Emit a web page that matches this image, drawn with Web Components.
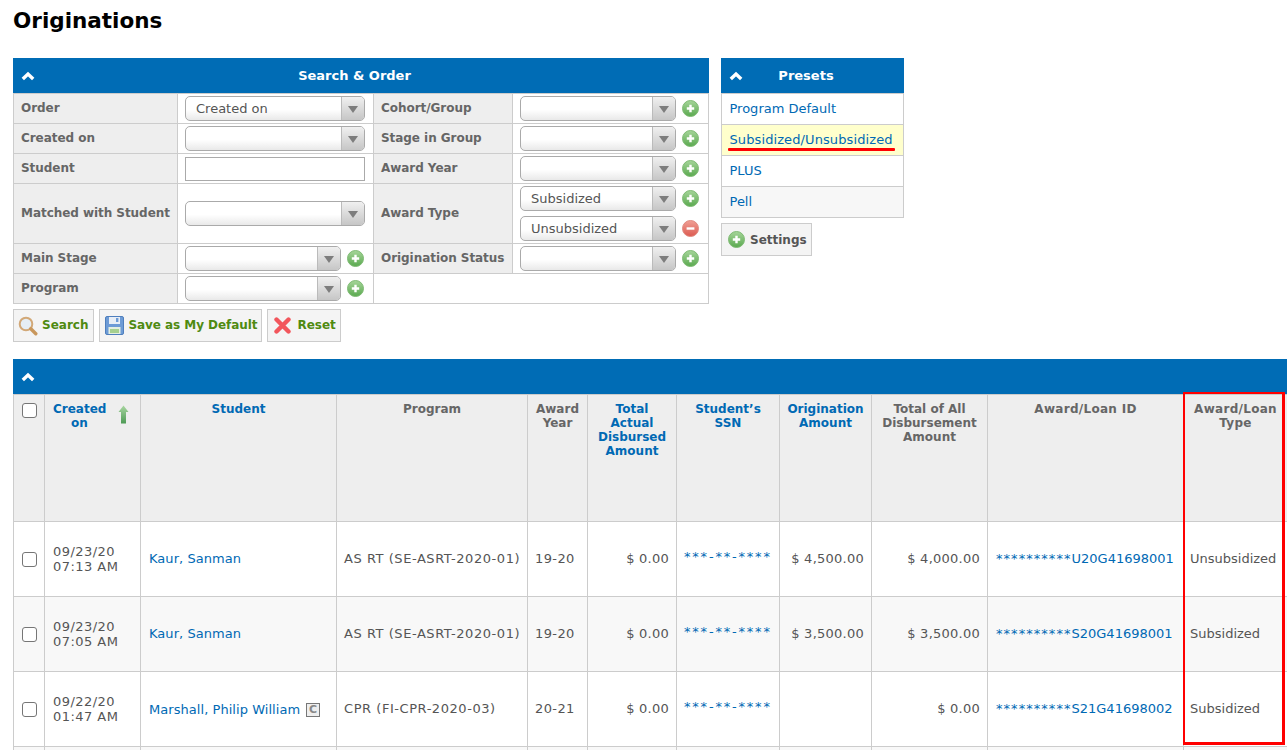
<!DOCTYPE html>
<html lang="en"><head><meta charset="utf-8"><title>Originations</title>
<style>
html,body{margin:0;padding:0;background:#fff;overflow:hidden;height:750px}
body{font:13px/15px "DejaVu Sans","Liberation Sans",sans-serif;color:#555}
</style></head><body>
<origination-page></origination-page>
<script>
const ICONS={
chev:'<svg width="14" height="10" viewBox="0 0 14 10"><path d="M1.800 8 7 3l5.200 5" fill="none" stroke="#fff" stroke-width="3.400"/></svg>',
plus:'<svg width="17" height="17" viewBox="0 0 17 17"><defs><linearGradient id="g" x1="0" y1="0" x2="0" y2="1"><stop offset="0" stop-color="#a6d59a"/><stop offset="1" stop-color="#5aa94f"/></linearGradient></defs><circle cx="8.500" cy="8.500" r="8" fill="url(#g)" stroke="#7fbb74"/><path d="M8.500 4.800v7.400M4.800 8.500h7.400" stroke="#fff" stroke-width="2.400"/></svg>',
minus:'<svg width="17" height="17" viewBox="0 0 17 17"><defs><linearGradient id="r" x1="0" y1="0" x2="0" y2="1"><stop offset="0" stop-color="#f0a096"/><stop offset="1" stop-color="#dc5a50"/></linearGradient></defs><circle cx="8.500" cy="8.500" r="8" fill="url(#r)" stroke="#e08a80"/><path d="M4.600 8.500h7.800" stroke="#fff" stroke-width="2.400"/></svg>',
search:'<svg width="20" height="20" viewBox="0 0 20 20"><circle cx="8" cy="8" r="6.300" fill="#e6eef5" stroke="#d2a877" stroke-width="2"/><path d="m12.800 12.800 5 5" stroke="#c9975c" stroke-width="3.400" stroke-linecap="round"/></svg>',
save:'<svg width="19" height="19" viewBox="0 0 19 19"><rect x=".5" y=".5" width="18" height="18" rx="1.500" fill="#6d9bd6" stroke="#4f7fbd"/><rect x="4" y="1" width="11" height="7" fill="#e8eef6"/><rect x="11" y="2" width="2.400" height="4" fill="#6d9bd6"/><rect x="3.500" y="11" width="12" height="7" fill="#e4efe0"/><rect x="5" y="13" width="9" height="4" fill="#a6d08f"/></svg>',
reset:'<svg width="17" height="17" viewBox="0 0 17 17"><path d="m2.500 2.500 12 12m0-12-12 12" stroke="#f2565c" stroke-width="4.400" stroke-linecap="round"/></svg>',
arrow:'<svg width="11" height="19" viewBox="0 0 11 19"><defs><linearGradient id="a" x1="0" y1="0" x2="0" y2="1"><stop offset="0" stop-color="#a8d6a0"/><stop offset="1" stop-color="#4d9a55"/></linearGradient></defs><path d="M5.500 .5 10.500 7H8v11.500H3V7H.5z" fill="url(#a)"/></svg>'
};
function shadow(el,html){el.attachShadow({mode:'open'}).innerHTML=html;return el.shadowRoot}

class UiIcon extends HTMLElement{connectedCallback(){
  shadow(this,`<style>:host{display:inline-flex;flex:none;justify-content:center}svg{display:block}</style>${ICONS[this.getAttribute('name')]}`)
}}
customElements.define('ui-icon',UiIcon);

class UiSelect extends HTMLElement{connectedCallback(){
  shadow(this,`<style>
  :host{display:flex;align-items:center;gap:6px}
  .box{display:flex;width:var(--w,180px);height:25px;box-sizing:border-box;border:1px solid #aaa;border-radius:5px;overflow:hidden;background:linear-gradient(#fff 55%,#e9e9e9)}
  .v{flex:1;padding:0 10px;line-height:23px;color:#555;white-space:nowrap}
  .b{width:22px;border-left:1px solid #bbb;background:linear-gradient(#f0f0f0,#c6c6c6);display:flex;align-items:center;justify-content:center}
  .b i{width:0;height:0;border:5px solid transparent;border-top:7px solid #7d7d7d;border-bottom:0;margin-top:2px}
  </style><div class="box"><div class="v"><slot></slot></div><div class="b"><i></i></div></div>${this.hasAttribute('icon')?`<ui-icon name="${this.getAttribute('icon')}"></ui-icon>`:''}`)
}}
customElements.define('ui-select',UiSelect);

class UiButton extends HTMLElement{connectedCallback(){
  shadow(this,`<style>
  :host{display:inline-flex;align-items:center;gap:var(--g,4px);height:33px;box-sizing:border-box;border:1px solid #ccc;background:#f4f4f4;padding:0 var(--pr,4px) 0 4px;font-size:12px;font-weight:700;color:var(--c,#4f8a10);letter-spacing:var(--ls,0)}
  ui-icon{width:20px}
  .x{position:relative;top:var(--ty,0)}
  </style><ui-icon name="${this.getAttribute('icon')}"></ui-icon><span class="x"><slot></slot></span>`)
}}
customElements.define('ui-button',UiButton);

class PanelHead extends HTMLElement{connectedCallback(){
  shadow(this,`<style>
  :host{display:flex;align-items:center;height:35px;background:#006cb5;color:#fff;font-weight:700;position:relative}
  ui-icon{margin-left:8px}
  .t{flex:1;text-align:center;padding-right:35px}
  </style><ui-icon name="chev"></ui-icon><div class="t"><slot></slot></div>`)
}}
customElements.define('panel-head',PanelHead);

class SearchPanel extends HTMLElement{connectedCallback(){
  const P='plus';
  const rows=[
   ['Order',['Created on'],0,'Cohort/Group',[''],P],
   ['Created on',[''],0,'Stage in Group',[''],P],
   ['Student',null,0,'Award Year',[''],P],
   ['Matched with Student',[''],0,'Award Type',['Subsidized','Unsubsidized'],'pm'],
   ['Main Stage',[''],P,'Origination Status',[''],P],
   ['Program',[''],P,'',null,0]];
  const ctl=(vals,ic)=>{
    if(vals===null) return '<input type="text" aria-label="Student">';
    return vals.map((v,i)=>{
      const icon=ic==='pm'?(i?'minus':'plus'):ic;
      return `<ui-select ${icon?`icon="${icon}" style="--w:156px"`:''}>${v}</ui-select>`}).join('');
  };
  const body=rows.map(r=>`<tr><th>${r[0]}</th><td>${r[0]==='Student'?ctl(null):ctl(r[1],r[2])}</td>${r[3]?`<th>${r[3]}</th><td>${ctl(r[4],r[5])}</td>`:'<td colspan="2"></td>'}</tr>`).join('');
  shadow(this,`<style>
  :host{display:block;width:696px}
  table{border-collapse:collapse;table-layout:fixed;width:695px;margin-left:0}
  th,td{border:1px solid #ccc;padding:0;height:29px;box-sizing:border-box}
  tr{height:30px}
  th{background:#eee;text-align:left;padding:0 7px 1px 7px;color:#666;font-size:12px;font-weight:700;white-space:nowrap;letter-spacing:-.05px}
  td{padding:2px 7px 2px}
  td ui-select+ui-select{margin-top:5px}
  input{display:block;box-sizing:border-box;width:180px;height:24px;border:1px solid #aaa;margin:0;padding:0;background:#fff}
  .t{display:flex;gap:5px;margin-top:5px}
  </style><panel-head>Search &amp; Order</panel-head>
  <table><colgroup><col style="width:164px"><col style="width:196px"><col style="width:139px"><col style="width:196px"></colgroup>${body}</table>
  <div class="t"><ui-button icon="search" style="--pr:5px">Search</ui-button><ui-button icon="save" style="--ls:-.06px">Save as My Default</ui-button><ui-button icon="reset" style="--g:5px">Reset</ui-button></div>`)
}}
customElements.define('search-panel',SearchPanel);

class PresetsPanel extends HTMLElement{connectedCallback(){
  shadow(this,`<style>
  :host{display:block;width:183px;position:relative}
  ul{list-style:none;margin:0;padding:0;border:1px solid #ccc;border-top:0}
  li{height:30px;line-height:30px;padding-left:7.500px;border-top:1px solid #ccc;color:#0069b4;white-space:nowrap;background:#fff}
  li.a{background:#ffc;letter-spacing:.1px}
  li.l{background:#f7f7f7}
  .u{position:absolute;left:7px;top:90px;width:167px;height:3px;background:#f00;border-radius:1px}
  ui-button{margin-top:5px;--c:#555;--g:4px;--ty:1px;--pr:4px}
  </style><panel-head>Presets</panel-head>
  <ul><li>Program Default</li><li class="a">Subsidized/Unsubsidized</li><li>PLUS</li><li class="l">Pell</li></ul>
  <div class="u"></div>
  <ui-button icon="plus">Settings</ui-button>`)
}}
customElements.define('presets-panel',PresetsPanel);

class ResultsTable extends HTMLElement{connectedCallback(){
  const cols=[31,96,196,191,60,89,103,92,116,196,104];
  const head=[['<input type="checkbox" aria-label="All">',0,'c'],['Created on',1,'s'],['Student',1],['Program',0],['Award Year',0],['Total Actual Disbursed Amount',1],['Student’s SSN',1],['Origination Amount',1],['Total of All Disbursement Amount',0],['<span class="w">Award/Loan ID</span>',0],['<span class="w">Award/Loan Type</span>',0]];
  const data=[
   ['09/23/20','07:13 AM','Kaur, Sanman','AS RT (SE-ASRT-2020-01)','19-20','$ 0.00','$ 4,500.00','$ 4,000.00','U20G41698001','Unsubsidized'],
   ['09/23/20','07:05 AM','Kaur, Sanman','AS RT (SE-ASRT-2020-01)','19-20','$ 0.00','$ 3,500.00','$ 3,500.00','S20G41698001','Subsidized'],
   ['09/22/20','01:47 AM','Marshall, Philip William','CPR (FI-CPR-2020-03)','20-21','$ 0.00','','$ 0.00','S21G41698002','Subsidized']];
  const th=head.map(h=>h[2]==='c'?`<th class="ck">${h[0]}</th>`:h[2]==='s'?`<th class="link"><div class="sort"><span>${h[0]}</span><ui-icon name="arrow"></ui-icon></div></th>`:`<th class="${h[1]?'link':''}">${h[0]}</th>`).join('');
  const tr=data.map((d,i)=>`<tr class="${i%2?'odd':''}">
   <td class="ck"><input type="checkbox" aria-label="Select"></td>
   <td class="date">${d[0]}<br>${d[1]}</td>
   <td class="stu ${i==2?'m':''}"><a>${d[2]}</a>${i==2?'<span class="c">C</span>':''}</td>
   <td class="prog">${d[3]}</td><td class="yr">${d[4]}</td><td class="r">${d[5]}</td>
   <td class="ssn"><a>***-**-****</a></td><td class="r">${d[6]}</td><td class="r">${d[7]}</td>
   <td class="id"><a><span class="st">**********</span>${d[8]}</a></td><td class="typ">${d[9]}</td></tr>`).join('');
  const empty=`<tr class="odd">${cols.map(()=>'<td></td>').join('')}</tr>`;
  shadow(this,`<style>
  :host{display:block;position:relative;margin-top:17px;overflow:hidden;height:391px}
  table{border-collapse:collapse;table-layout:fixed;width:${cols.reduce((a,b)=>a+b)}px}
  th,td{border:1px solid #ccc;box-sizing:border-box;padding:0 7px}
  th{background:#eee;height:127px;vertical-align:top;padding-top:7px;line-height:14px;color:#666;font-size:12px;font-weight:700;text-align:center}
  th.link{color:#0069b4}
  .w{letter-spacing:.3px}
  td{height:75px;vertical-align:middle;background:#fff;white-space:nowrap;padding-bottom:2px}
  tr.odd td{background:#f8f8f8}
  a{color:#0069b4}
  .r{text-align:right;letter-spacing:.25px}
  .date{padding:0 0 0 8px;letter-spacing:.45px}
  .stu{padding-left:8px;letter-spacing:.05px}
  .stu.m{padding:1px 0 0 8px}
  .prog{letter-spacing:.55px}
  .yr{letter-spacing:.4px}
  .id{padding-left:8px}
  .st{letter-spacing:1.050px}
  .typ{padding-left:6px}
  .ssn a{position:relative;top:-2px;letter-spacing:1.800px}
  th.ck{padding:8px 0 0;text-align:center}
  td.ck{padding:0;text-align:center}
  input{appearance:none;display:inline-block;width:15px;height:15px;margin:0;box-sizing:border-box;border:1px solid #767676;border-radius:3px;background:#fff;vertical-align:middle}
  .sort{display:flex;align-items:center;justify-content:space-between;padding-left:1px}
  .sort span{display:block;flex:none;width:53px}
  .sort ui-icon{margin:-3px 4px 0 0}
  .c{display:inline-block;box-sizing:border-box;width:14px;height:14px;line-height:12px;margin-left:6px;border:1px solid #777;background:#eee;color:#888;font-size:11px;font-weight:700;text-align:center;vertical-align:1px;letter-spacing:0}
  .red{position:absolute;left:1170px;top:33px;width:102px;height:353px;box-sizing:border-box;border:3px solid #f00;border-width:2px 3px 3px 2px}
  </style><panel-head></panel-head>
  <table><colgroup>${cols.map(c=>`<col style="width:${c}px">`).join('')}</colgroup><thead><tr>${th}</tr></thead><tbody>${tr}${empty}</tbody></table>
  <div class="red"></div>`)
}}
customElements.define('results-table',ResultsTable);

class OriginationPage extends HTMLElement{connectedCallback(){
  shadow(this,`<style>
  :host{display:block;padding:0 0 0 13px}
  h1{margin:0;padding:9px 0 0;height:58px;box-sizing:border-box;font-size:21.500px;line-height:24px;font-weight:700;color:#000}
  .top{display:flex;gap:12px;align-items:flex-start}
  </style><h1>Originations</h1>
  <div class="top"><search-panel></search-panel><presets-panel></presets-panel></div>
  <results-table></results-table>`)
}}
customElements.define('origination-page',OriginationPage);
</script>
</body></html>
